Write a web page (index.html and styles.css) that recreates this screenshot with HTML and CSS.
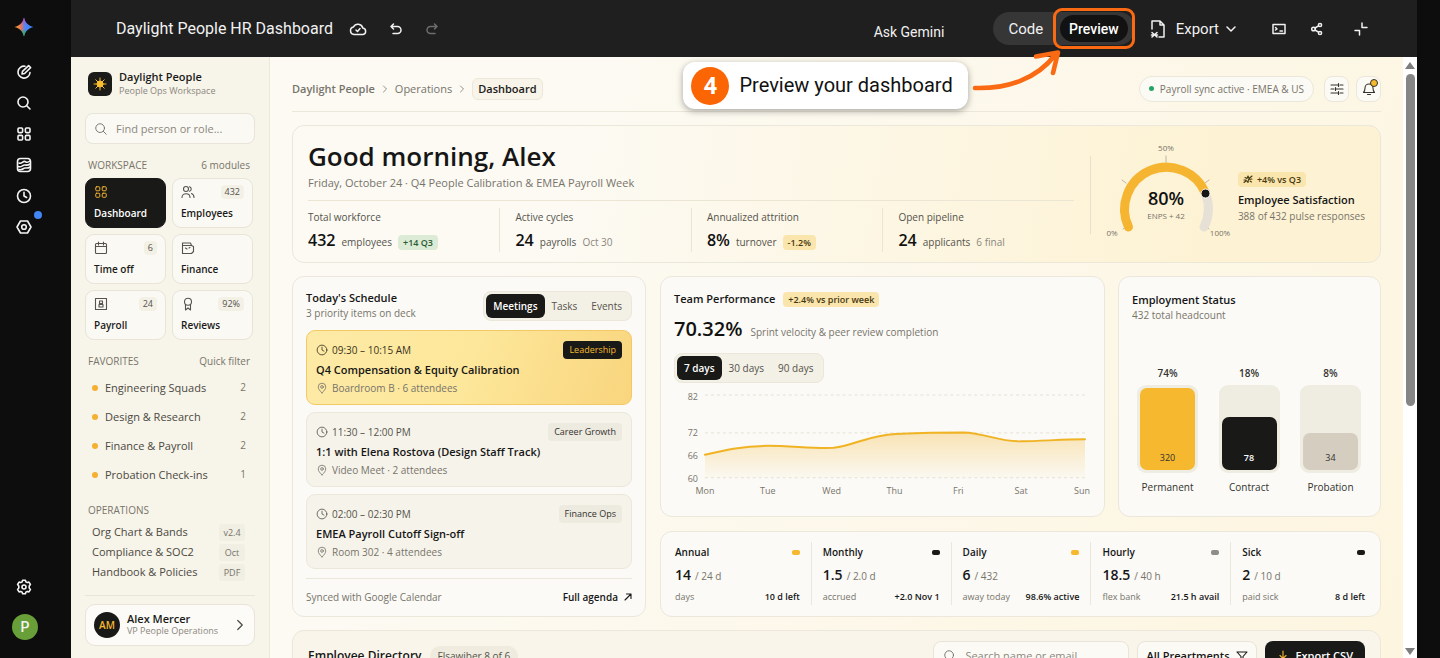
FILE: index.html
```html
<!DOCTYPE html>
<html lang="en">
<head>
<meta charset="utf-8">
<title>Daylight People HR Dashboard</title>
<link rel="stylesheet" href="styles.css">
</head>
<body>
<svg class="defs" aria-hidden="true">
  <symbol id="i-search" viewBox="0 0 16 16"><circle cx="7" cy="7" r="5"/><path d="M10.700 10.700L14 14"/></symbol>
  <symbol id="i-grid" viewBox="0 0 16 16"><rect x="2" y="2" width="4.600" height="4.600" rx="1"/><rect x="9.400" y="2" width="4.600" height="4.600" rx="1"/><rect x="2" y="9.400" width="4.600" height="4.600" rx="1"/><rect x="9.400" y="9.400" width="4.600" height="4.600" rx="1"/></symbol>
  <symbol id="i-clock" viewBox="0 0 16 16"><circle cx="8" cy="8" r="6.500"/><path d="M8 4.200V8l2.600 1.500"/></symbol>
  <symbol id="i-pin" viewBox="0 0 16 16"><path d="M8 14.500C5 11.600 3 9.300 3 6.600a5 5 0 0 1 10 0c0 2.700-2 5-5 7.900z"/><circle cx="8" cy="6.600" r="1.800"/></symbol>
  <symbol id="i-right" viewBox="0 0 8 8"><path d="M2.500 1l3 3-3 3"/></symbol>
</svg>

<nav class="rail" aria-label="Gemini">
  <a class="rail-btn logo" href="#" aria-label="Gemini home"><svg viewBox="0 0 20 20" width="20" height="20">
    <defs>
      <linearGradient id="g1" x1="0" y1="0.500" x2="1" y2="0.500"><stop offset="0" stop-color="#f9a825"/><stop offset="0.350" stop-color="#e8745c"/><stop offset="0.550" stop-color="#4f86f7"/><stop offset="1" stop-color="#3b82f6"/></linearGradient>
      <linearGradient id="g2" x1="0" y1="0" x2="0" y2="1"><stop offset="0" stop-color="#d946c8"/><stop offset="0.400" stop-color="#a24bd8" stop-opacity="0"/><stop offset="0.600" stop-color="#22b35e" stop-opacity="0"/><stop offset="0.900" stop-color="#22b35e"/></linearGradient>
    </defs>
    <path fill="url(#g1)" d="M10 .500C11 5.500 14.500 9 19.500 10 14.500 11 11 14.500 10 19.500 9 14.500 5.500 11 .500 10 5.500 9 9 5.500 10 .500z"/>
    <path fill="url(#g2)" d="M10 .500C11 5.500 14.500 9 19.500 10 14.500 11 11 14.500 10 19.500 9 14.500 5.500 11 .500 10 5.500 9 9 5.500 10 .500z"/></svg></a>
  <button class="rail-btn" aria-label="New chat"><svg class="ic" viewBox="0 0 16 16" width="16" height="16"><path d="M9 2.200A6 6 0 1 0 14 8.500"/><path d="M6 10l.500-2.600L12.600 1.600l2 2L8.600 9.500z"/></svg></button>
  <button class="rail-btn" aria-label="Search"><svg class="ic" width="16" height="16"><use href="#i-search"/></svg></button>
  <button class="rail-btn" aria-label="Apps"><svg class="ic" width="16" height="16"><use href="#i-grid"/></svg></button>
  <button class="rail-btn" aria-label="Library"><svg class="ic" viewBox="0 0 16 16" width="16" height="16"><rect x="1.500" y="1.500" width="13" height="13" rx="3"/><path d="M3 6c3 1.500 4-2.500 6-1.500S11.500 6 14 4M2 9.500c4 1.500 4.500-2 7-1.500s3 .500 5-1M3 12.500c4 1 4-1.500 6-1.500s3 .500 5-1"/></svg></button>
  <button class="rail-btn" aria-label="Recent"><svg class="ic" width="16" height="16"><use href="#i-clock"/></svg></button>
  <button class="rail-btn" aria-label="Extensions"><svg class="ic" viewBox="0 0 16 16" width="16" height="16"><path d="M4.500 2h7L15 8l-3.500 6h-7L1 8z"/><circle cx="8" cy="8" r="2.300"/></svg><span class="rail-dot"></span></button>
  <button class="rail-btn rail-end" aria-label="Settings"><svg class="ic" viewBox="0 0 16 16" width="16" height="16"><path d="M6.600 1.200h2.800l.500 1.700 1.300.700 1.700-.500 1.500 2.400-1.200 1.400v2.200l1.200 1.400-1.500 2.400-1.700-.500-1.300.700-.500 1.700H6.600l-.500-1.700-1.300-.700-1.700.500-1.500-2.400 1.200-1.400V6.900L1.600 5.500l1.500-2.400 1.700.500 1.300-.700z"/><circle cx="8" cy="8" r="2"/></svg></button>
  <a class="me" href="#">P</a>
</nav>

<div class="canvas">
  <header class="bar">
    <h2 class="doc-title">Daylight People HR Dashboard</h2>
    <div class="doc-tools">
      <button aria-label="Saved to cloud"><svg class="ic" viewBox="0 0 18 14" width="18" height="14"><path d="M5 12.500a3.800 3.800 0 0 1-.500-7.500 5 5 0 0 1 9.300 1A3.300 3.300 0 0 1 14 12.500z"/><path d="M7 8l1.500 1.500L11 6.500"/></svg></button>
      <button aria-label="Undo"><svg class="ic" viewBox="0 0 14 14" width="14" height="14"><path d="M4.500 2L2 4.500 4.500 7M2 4.500h6.500a3.500 3.500 0 0 1 0 7H4"/></svg></button>
      <button class="dim" aria-label="Redo"><svg class="ic" viewBox="0 0 14 14" width="14" height="14"><path d="M9.500 2L12 4.500 9.500 7M12 4.500H5.500a3.500 3.500 0 0 0 0 7H10"/></svg></button>
    </div>
    <button class="ask">Ask Gemini</button>
    <div class="mode">
      <button class="mode-btn">Code</button>
      <div class="mode-focus">
        <button class="mode-btn on">Preview</button>
        <div class="callout"><span class="step">4</span>Preview your dashboard</div>
        <svg class="arrow" viewBox="0 0 96 48" width="96" height="48"><path d="M6 40C38 41 68 31 86 7M67 8.500L89 4.500 84 25"/></svg>
      </div>
    </div>
    <button class="export"><svg class="ic" viewBox="0 0 16 20" width="16" height="20"><path d="M2 10V2h8l4 4v12H9M10 2v4h4M2 13.500l5 4.500M7 13.500L2 18M1.500 16h6"/></svg>Export<svg class="ic chev" viewBox="0 0 10 8" width="10" height="8"><path d="M1 2l4 4 4-4"/></svg></button>
    <div class="bar-icons">
      <button aria-label="Console"><svg class="ic" viewBox="0 0 14 12" width="14" height="12"><rect x="1" y="1.500" width="12" height="9"/><path d="M3.500 4.500l1.500 1.500-1.500 1M8 8h2.500"/></svg></button>
      <button aria-label="Share"><svg class="ic" viewBox="0 0 14 14" width="14" height="14"><circle cx="3.500" cy="7" r="1.800"/><circle cx="10" cy="3" r="1.600"/><circle cx="10" cy="11" r="1.600"/><path d="M5 6l3.500-2.200M5 8l3.500 2.200"/></svg></button>
      <button aria-label="Collapse"><svg class="ic" viewBox="0 0 14 14" width="14" height="14"><path d="M8 1v4.500h5M1 8.500h4.500V13"/></svg></button>
    </div>
  </header>

  <div class="app">
    <aside class="side">
      <div class="brand">
        <span class="brand-mark"><svg viewBox="0 0 14 14" width="14" height="14"><circle cx="7" cy="7" r="3"/><path d="M7 1v12M1 7h12M2.800 2.800l8.400 8.400M11.200 2.800l-8.400 8.400"/></svg></span>
        <div><strong>Daylight People</strong><small>People Ops Workspace</small></div>
      </div>
      <label class="find"><svg class="ic" width="14" height="14"><use href="#i-search"/></svg><input type="text" placeholder="Find person or role..." aria-label="Find person or role"></label>

      <div class="side-head"><h3>WORKSPACE</h3><span>6 modules</span></div>
      <div class="tiles">
        <a class="tile on" href="#"><span class="tile-top"><svg class="ic" width="14" height="14"><use href="#i-grid"/></svg></span>Dashboard</a>
        <a class="tile" href="#"><span class="tile-top"><svg class="ic" viewBox="0 0 14 14" width="14" height="14"><circle cx="5" cy="4" r="2.500"/><path d="M1 12.500c0-5 8-5 8 0M8.500 1.700a2.400 2.400 0 0 1 0 4.600M10.500 8.500c2 .700 2.500 2.500 2.500 4"/></svg><b>432</b></span>Employees</a>
        <a class="tile" href="#"><span class="tile-top"><svg class="ic" viewBox="0 0 14 14" width="14" height="14"><rect x="1.500" y="2.500" width="11" height="10" rx="1"/><path d="M1.500 5.500h11M4.500 1v3M9.500 1v3"/></svg><b>6</b></span>Time off</a>
        <a class="tile" href="#"><span class="tile-top"><svg class="ic" viewBox="0 0 14 14" width="14" height="14"><path d="M1.500 2h8l1 2.500 2 1v5l-2 2h-9zM1.500 4.500h9M4.500 7l1.500 1M8 7l1-.500"/></svg></span>Finance</a>
        <a class="tile" href="#"><span class="tile-top"><svg class="ic" viewBox="0 0 14 14" width="14" height="14"><rect x="1.500" y="1.500" width="11" height="11"/><path d="M5.500 4h3v2.500h-3zM5 7.500h4V10H5z"/></svg><b>24</b></span>Payroll</a>
        <a class="tile" href="#"><span class="tile-top"><svg class="ic" viewBox="0 0 14 14" width="14" height="14"><circle cx="7" cy="4.700" r="3.500"/><path d="M4.500 7.500v5.500L7 11l2.500 2V7.500"/></svg><b>92%</b></span>Reviews</a>
      </div>

      <div class="side-head"><h3>FAVORITES</h3><span>Quick filter</span></div>
      <ul class="favs">
        <li><a href="#">Engineering Squads</a><span>2</span></li>
        <li><a href="#">Design &amp; Research</a><span>2</span></li>
        <li><a href="#">Finance &amp; Payroll</a><span>2</span></li>
        <li><a href="#">Probation Check-ins</a><span>1</span></li>
      </ul>

      <div class="side-head"><h3>OPERATIONS</h3></div>
      <ul class="ops">
        <li><a href="#">Org Chart &amp; Bands</a><span>v2.4</span></li>
        <li><a href="#">Compliance &amp; SOC2</a><span>Oct</span></li>
        <li><a href="#">Handbook &amp; Policies</a><span>PDF</span></li>
      </ul>
      <div class="side-foot">
        <button class="user"><span class="initials">AM</span><span class="user-text"><strong>Alex Mercer</strong><small>VP People Operations</small></span><svg class="ic thin" width="12" height="12"><use href="#i-right"/></svg></button>
      </div>
    </aside>

    <main class="main">
      <div class="top">
        <nav class="crumbs" aria-label="Breadcrumb"><a class="root" href="#">Daylight People</a><svg class="ic thin" width="8" height="8"><use href="#i-right"/></svg><a href="#">Operations</a><svg class="ic thin" width="8" height="8"><use href="#i-right"/></svg><span class="here">Dashboard</span></nav>
        <span class="sync">Payroll sync active · EMEA &amp; US</span>
        <button class="sq" aria-label="Filters"><svg class="ic" viewBox="0 0 14 14" width="14" height="14"><path d="M1 3h7M10 3h3M1 7h3M6 7h7M1 11h7M10 11h3M8.500 1.500v3M5.500 5.500v3M8.500 9.500v3"/></svg></button>
        <button class="sq" aria-label="Notifications"><svg class="ic" viewBox="0 0 14 14" width="14" height="14"><path d="M1.500 10.500C3 9 3 8 3 6a4 4 0 0 1 8 0c0 2 0 3 1.500 4.500zM5.500 12.500h3"/></svg><span class="alert"></span></button>
      </div>

      <section class="card hero">
        <div class="hero-main">
          <h1>Good morning, Alex</h1>
          <p>Friday, October 24 · Q4 People Calibration &amp; EMEA Payroll Week</p>
          <div class="metrics">
            <div><h4>Total workforce</h4><p><b>432</b>employees<span class="tag green">+14 Q3</span></p></div>
            <div><h4>Active cycles</h4><p><b>24</b>payrolls<i>Oct 30</i></p></div>
            <div><h4>Annualized attrition</h4><p><b>8%</b>turnover<span class="tag">-1.2%</span></p></div>
            <div><h4>Open pipeline</h4><p><b>24</b>applicants<i>6 final</i></p></div>
          </div>
        </div>
        <div class="rule"></div>
        <svg class="gauge" viewBox="0 0 130 100" width="130" height="100">
          <path class="tick" d="M64 16v6M20 40l4 3M107 40l-4 3M21 89l4-3M107 89l-4-3"/>
          <path class="track" d="M103.500 53.500A42 42 0 0 1 102 87"/>
          <path class="fill" d="M26.500 87A42 42 0 1 1 103.500 53.500"/>
          <circle class="knob" cx="103.500" cy="53.500" r="4.500"/>
          <text class="g-val" x="64" y="65">80%</text>
          <text class="g-sub" x="64" y="79">ENPS + 42</text>
          <text class="g-sub" x="64" y="11">50%</text>
          <text class="g-sub" x="10" y="96">0%</text>
          <text class="g-sub" x="118" y="96">100%</text>
        </svg>
        <div class="sat">
          <span class="tag"><svg class="ic" viewBox="0 0 10 10" width="10" height="10"><path d="M1 8.500l2.500-2 1.500 2 .500-3L9 5M2 3.500l2 1L5 2l1 2.500L9 2M1 6h2M7 7l1.500 1"/></svg>+4% vs Q3</span>
          <h3>Employee Satisfaction</h3>
          <p>388 of 432 pulse responses</p>
        </div>
      </section>

      <div class="cols">
        <section class="card sched">
          <div class="row-head">
            <div><h3>Today's Schedule</h3><p class="sub">3 priority items on deck</p></div>
            <div class="seg"><button class="on">Meetings</button><button>Tasks</button><button>Events</button></div>
          </div>
          <div class="events">
            <article class="event hot"><span class="when"><svg class="ic" width="12" height="12"><use href="#i-clock"/></svg>09:30 – 10:15 AM</span><span class="kind">Leadership</span><h4>Q4 Compensation &amp; Equity Calibration</h4><span class="where"><svg class="ic" width="12" height="12"><use href="#i-pin"/></svg>Boardroom B · 6 attendees</span></article>
            <article class="event"><span class="when"><svg class="ic" width="12" height="12"><use href="#i-clock"/></svg>11:30 – 12:00 PM</span><span class="kind">Career Growth</span><h4>1:1 with Elena Rostova (Design Staff Track)</h4><span class="where"><svg class="ic" width="12" height="12"><use href="#i-pin"/></svg>Video Meet · 2 attendees</span></article>
            <article class="event"><span class="when"><svg class="ic" width="12" height="12"><use href="#i-clock"/></svg>02:00 – 02:30 PM</span><span class="kind">Finance Ops</span><h4>EMEA Payroll Cutoff Sign-off</h4><span class="where"><svg class="ic" width="12" height="12"><use href="#i-pin"/></svg>Room 302 · 4 attendees</span></article>
          </div>
          <div class="sched-foot"><span>Synced with Google Calendar</span><a href="#">Full agenda<svg class="ic" viewBox="0 0 8 8" width="8" height="8"><path d="M1 7l6-6M2.500 1H7v4.500"/></svg></a></div>
        </section>

        <div class="right">
          <section class="card perf">
            <div class="perf-title"><h3>Team Performance</h3><span class="tag">+2.4% vs prior week</span></div>
            <p class="perf-val"><b>70.32%</b>Sprint velocity &amp; peer review completion</p>
            <div class="seg"><button class="on">7 days</button><button>30 days</button><button>90 days</button></div>
            <svg class="chart" viewBox="0 0 417 112">
              <defs><linearGradient id="area" x1="0" y1="0" x2="0" y2="1"><stop offset="0" stop-color="#f5c661" stop-opacity="0.450"/><stop offset="1" stop-color="#f5c661" stop-opacity="0.030"/></linearGradient></defs>
              <path class="gridline" d="M31 8H412M31 46H412M31 91H412"/>
              <path fill="url(#area)" d="M31 68C52 63 70 59 94 59S140 62 160 61C182 58 196 48 222 47S270 45.500 290 45.500C312 46 325 55 348 54.500S392 52.500 412 52.500V91H31z"/>
              <path class="line" d="M31 68C52 63 70 59 94 59S140 62 160 61C182 58 196 48 222 47S270 45.500 290 45.500C312 46 325 55 348 54.500S392 52.500 412 52.500"/>
              <g class="ylab"><text x="24" y="13">82</text><text x="24" y="49">72</text><text x="24" y="72">66</text><text x="24" y="95">60</text></g>
              <g class="xlab"><text x="31" y="107">Mon</text><text x="94" y="107">Tue</text><text x="158" y="107">Wed</text><text x="221" y="107">Thu</text><text x="285" y="107">Fri</text><text x="348" y="107">Sat</text><text x="409" y="107">Sun</text></g>
            </svg>
          </section>

          <section class="card status">
            <h3>Employment Status</h3>
            <p class="sub">432 total headcount</p>
            <div class="bars">
              <div class="bar-col"><b>74%</b><div class="slot"><div class="level gold" style="height:100%">320</div></div>Permanent</div>
              <div class="bar-col"><b>18%</b><div class="slot"><div class="level ink" style="height:65%">78</div></div>Contract</div>
              <div class="bar-col"><b>8%</b><div class="slot"><div class="level stone" style="height:45%">34</div></div>Probation</div>
            </div>
          </section>

          <section class="card leave">
            <div><h4>Annual<i class="gold"></i></h4><p><b>14</b>/ 24 d</p><footer>days<strong>10 d left</strong></footer></div>
            <div><h4>Monthly<i class="ink"></i></h4><p><b>1.5</b>/ 2.0 d</p><footer>accrued<strong>+2.0 Nov 1</strong></footer></div>
            <div><h4>Daily<i class="gold"></i></h4><p><b>6</b>/ 432</p><footer>away today<strong>98.6% active</strong></footer></div>
            <div><h4>Hourly<i class="grey"></i></h4><p><b>18.5</b>/ 40 h</p><footer>flex bank<strong>21.5 h avail</strong></footer></div>
            <div><h4>Sick<i class="ink"></i></h4><p><b>2</b>/ 10 d</p><footer>paid sick<strong>8 d left</strong></footer></div>
          </section>
        </div>
      </div>

      <section class="card dir">
        <h3>Employee Directory</h3><span class="chip">Flsawiber 8 of 6</span>
        <label class="dir-find"><svg class="ic" width="14" height="14"><use href="#i-search"/></svg><input type="text" placeholder="Search name or email..." aria-label="Search name or email"></label>
        <span class="dept"><select aria-label="Department"><option>All Preartments</option></select><svg class="ic" viewBox="0 0 12 12" width="12" height="12"><path d="M1 2h10L7 6.500V11H5V6.500z"/></svg></span>
        <button class="csv"><svg class="ic" viewBox="0 0 12 12" width="12" height="12"><path d="M6 1v7M3 5.500l3 3 3-3M2 11h8"/></svg>Export CSV</button>
      </section>
    </main>
    <div class="scroll" aria-hidden="true"><span class="up"></span><span class="thumb"></span><span class="down"></span></div>
  </div>
</div>
</body>
</html>
```

FILE: styles.css
```css
* { box-sizing: border-box; }
body {
  margin: 0;
  display: flex;
  height: 100vh;
  overflow: hidden;
  padding-right: 23px;
  background: #0d0d0d;
  color: #161616;
  font: 11px/16px "Open Sans", "Noto Sans", sans-serif;
}
h1, h2, h3, h4, p, ul { margin: 0; padding: 0; }
h1, h2, h3, h4 { font-weight: 600; }
ul { list-style: none; }
button, input, select { font: inherit; color: inherit; border: 0; background: none; padding: 0; margin: 0; }
a { color: inherit; text-decoration: none; }
i { font-style: normal; }
.defs { position: absolute; width: 0; height: 0; }
.ic { flex: none; fill: none; stroke: currentColor; stroke-width: 1.1; stroke-linecap: round; stroke-linejoin: round; }
.thin { stroke-width: .8; }

/* Left rail */
.rail { flex: none; width: 71px; padding: 15px 12px 18px; display: flex; flex-direction: column; gap: 7px; color: #f4f4f4; }
.rail-btn { position: relative; width: 24px; height: 24px; display: grid; place-items: center; }
.rail-btn .ic { stroke-width: 1.6; }
.logo { margin-bottom: 14px; }
.rail-dot { position: absolute; top: -4px; right: -6px; width: 8px; height: 8px; border-radius: 50%; background: #4285f4; }
.rail-end { margin-top: auto; margin-bottom: 8px; }
.me { width: 26px; height: 26px; border-radius: 50%; background: #689f38; font: 500 14px/26px Roboto, sans-serif; text-align: center; }

/* Header bar */
.canvas { flex: 1; min-width: 0; display: flex; flex-direction: column; }
.bar { flex: none; height: 57px; display: flex; align-items: center; padding: 0 49px 0 45px; background: #1f1f1f; color: #f1f1f1; font-family: Roboto, sans-serif; }
.bar button { display: flex; align-items: center; }
.bar .ic { stroke-width: 1.5; }
.doc-title { font-size: 16px; font-weight: 400; }
.doc-tools { display: flex; gap: 22px; margin-left: 16px; }
.dim { color: #6d6d6d; }
.ask { margin: 6px 49px 0 auto; font-size: 14px; }
.mode { display: flex; align-items: center; height: 33px; border-radius: 17px; background: #363636; }
.mode-btn { height: 28px; padding: 0 9px; font-size: 15px; }
.mode > .mode-btn { padding-left: 15px; padding-right: 10px; }
.mode-btn.on { height: 27px; border-radius: 14px; background: #121212; color: #fff; font-size: 14px; font-weight: 500; }
.mode-focus { position: relative; padding: 4px; border: 3px solid #f96a12; border-radius: 9px; margin: -4px 0; }
.callout {
  position: absolute; z-index: 2; top: 51px; right: 164px;
  display: flex; align-items: center; gap: 10px;
  padding: 4px 15px 4px 8px;
  border-radius: 12px; background: #fff; color: #111;
  box-shadow: 0 2px 7px rgba(0, 0, 0, .35);
  font-size: 20px; line-height: 39px; white-space: nowrap;
}
.step { width: 38px; height: 38px; border-radius: 50%; background: #fb6504; color: #fff; font: 700 24px/38px Roboto, sans-serif; text-align: center; }
.arrow { position: absolute; z-index: 2; top: 37px; right: 67px; fill: none; stroke: #f96a12; stroke-width: 4.6; stroke-linecap: round; stroke-linejoin: round; }
.export { gap: 10px; margin-left: 15px; font-size: 15px; }
.chev { margin-left: -3px; }
.bar-icons { display: flex; gap: 24px; margin-left: 36px; }
.bar-icons button:last-child { margin-left: 6px; }

/* App frame */
.app { flex: 1; min-height: 0; display: flex; background: linear-gradient(115deg, #fcfaf3 30%, #fdf5df); }
.side { flex: none; width: 199px; padding: 15px 14px 12px; display: flex; flex-direction: column; background: #f7f4e9; border-right: 1px solid #ebe7da; color: #4b4942; }
.brand { display: flex; align-items: center; gap: 7px; height: 24px; padding-left: 3px; line-height: 14px; }
.brand-mark { width: 24px; height: 24px; border-radius: 6px; background: #1b1b19; display: grid; place-items: center; }
.brand-mark svg { fill: #fbc02d; stroke: #fbc02d; stroke-width: 1; stroke-linecap: round; }
.brand strong, .brand small { display: block; }
.brand strong { color: #1b1b19; font-weight: 600; }
.brand small, .user small { color: #8b887f; font-size: 9px; }
.find { display: flex; align-items: center; gap: 8px; height: 31px; margin-top: 17px; padding: 0 8px; border: 1px solid #e8e4d8; border-radius: 8px; background: #fbf9f3; color: #77746b; }
.find input, .dir-find input { flex: 1; min-width: 0; outline: 0; }
::placeholder { color: #8b887f; opacity: 1; }
.side-head { display: flex; justify-content: space-between; margin-top: 13px; padding: 0 5px 0 3px; font-size: 10px; color: #77746b; }
.side-head h3 { font-size: 10px; font-weight: 400; }
.tiles { display: grid; grid-template-columns: 1fr 1fr; gap: 6px; margin: 5px 2px 0 0; }
.tile { height: 50px; padding: 6px 8px; border: 1px solid #e8e4d8; border-radius: 9px; background: #fbf9f4; color: #1b1b19; font-size: 10px; font-weight: 600; }
.tile-top { display: flex; justify-content: space-between; align-items: center; height: 14px; margin-bottom: 6px; color: #55534c; }
.tile b { padding: 0 4px; border-radius: 4px; background: #f3f0e6; font-size: 9px; line-height: 14px; font-weight: 400; }
.tile.on { background: #191917; border-color: #191917; color: #fff; }
.tile.on .tile-top { color: #f5b82e; }
.favs { margin-top: 4px; }
.favs li { display: flex; justify-content: space-between; padding: 0 9px 0 7px; line-height: 29px; }
.favs a { display: flex; align-items: center; gap: 7px; }
.favs a::before { content: ""; width: 6px; height: 6px; border-radius: 50%; background: #f5b031; }
.favs span { color: #77746b; font-size: 10px; }
.ops { margin-top: 4px; }
.ops li { display: flex; align-items: center; justify-content: space-between; height: 20px; padding: 0 10px 0 7px; }
.ops span { padding: 0 4px; background: #f1eee3; border-radius: 3px; color: #77746b; font-size: 9px; line-height: 17px; min-width: 26px; text-align: center; }
.side-foot { margin-top: 13px; padding-top: 8px; border-top: 1px solid #e8e4d8; }
.user { width: 100%; height: 42px; display: flex; align-items: center; padding: 0 8px; border: 1px solid #e8e4d8; border-radius: 10px; background: #fcfbf7; text-align: left; line-height: 12px; }
.initials { width: 26px; height: 26px; border-radius: 50%; background: #191917; color: #f5b82e; font-size: 10px; font-weight: 600; line-height: 26px; text-align: center; }
.user-text { flex: 1; margin-left: 7px; }
.user-text strong, .user-text small { display: block; }
.user-text strong { color: #1b1b19; font-size: 11px; font-weight: 600; }

/* Main column */
.main { flex: 1; min-width: 0; overflow: hidden; padding: 0 22px 0 22px; display: flex; flex-direction: column; gap: 13px; }
.main > * { flex: none; }
.top { display: flex; align-items: center; gap: 7px; height: 55px; padding-top: 9px; border-bottom: 1px solid #ebe7da; }
.crumbs { flex: 1; display: flex; align-items: center; gap: 6px; color: #77746b; }
.root { font-weight: 600; }
.here { padding: 2px 5px; border: 1px solid #ebe7da; border-radius: 6px; background: #f8f4e9; color: #1b1b19; font-weight: 600; }
.sync { display: flex; align-items: center; gap: 6px; height: 26px; margin-right: 3px; padding: 0 9px; border: 1px solid #ebe7da; border-radius: 13px; background: #fcfaf4; color: #77746b; font-size: 10px; }
.sync::before { content: ""; width: 5px; height: 5px; border-radius: 50%; background: #22a565; }
.sq { position: relative; width: 25px; height: 26px; display: grid; place-items: center; border: 1px solid #ebe7da; border-radius: 8px; background: #fcfaf4; color: #33322e; }
.alert { position: absolute; top: 2px; right: 2px; width: 8px; height: 8px; border: 1px solid #33322e; border-radius: 50%; background: #f5b82e; }
.card { border: 1px solid #ebe7da; border-radius: 12px; background: #fbfaf6; }
.card h3 { font-size: 11px; line-height: 16px; }
.sub { color: #77746b; font-size: 10px; line-height: 15px; }
.tag { display: inline-flex; align-items: center; gap: 4px; padding: 0 5px; border-radius: 4px; background: #fae5ad; color: #45380f; font-size: 9px; font-weight: 600; line-height: 15px; }
.green { background: #dcebd5; color: #2a5a34; }

/* Hero */
.hero { display: flex; align-items: center; height: 138px; padding: 2px 15px 0; background: linear-gradient(100deg, #fcfaf3 25%, #fdf2d3 85%); }
.hero-main { flex: 1; min-width: 0; }
.hero h1 { font-size: 26px; line-height: 36px; font-weight: 600; }
.hero-main > p { color: #77746b; font-size: 11px; line-height: 18px; }
.metrics { display: grid; grid-template-columns: repeat(4, 1fr); margin-top: 8px; padding-top: 7px; border-top: 1px solid #ebe5d4; }
.metrics div { height: 44px; padding-left: 15px; border-left: 1px solid #ebe5d4; }
.metrics div:first-child { padding-left: 0; border: 0; }
.metrics h4 { font-size: 10px; font-weight: 400; line-height: 18px; color: #55534c; }
.metrics p { display: flex; align-items: baseline; gap: 6px; font-size: 10px; line-height: 28px; color: #55534c; }
.metrics b { color: #111; font-size: 16px; font-weight: 600; }
.metrics i { color: #8b887f; }
.rule { width: 1px; height: 78px; margin: 0 11px 0 16px; background: #e8e0cc; }
.gauge { flex: none; align-self: flex-start; margin-top: 12px; }
.gauge path { fill: none; stroke-width: 9; stroke-linecap: round; }
.gauge .track { stroke: #e6e0d6; }
.gauge .fill { stroke: #f5b531; }
.gauge .tick { stroke: #bdb6a5; stroke-width: 1; }
.knob { fill: #161616; stroke: #fff; stroke-width: 1; }
.gauge text { text-anchor: middle; fill: #77746b; font-size: 8px; }
.gauge .g-val { font-size: 18px; font-weight: 600; fill: #111; }
.sat { margin-left: 6px; padding-top: 6px; color: #77746b; font-size: 10px; }
.sat h3 { margin-top: 4px; color: #161616; }

/* Two-column area */
.cols { display: grid; grid-template-columns: 354fr 721fr; gap: 14px; }
.right { display: grid; grid-template-columns: 445fr 263fr; grid-template-rows: 1fr auto; gap: 14px 13px; }
.row-head { display: flex; justify-content: space-between; align-items: center; }
.seg { display: inline-flex; padding: 2px; border: 1px solid #ebe7da; border-radius: 8px; background: #f3f0e6; }
.seg button { height: 24px; padding: 0 7px; border-radius: 6px; color: #55534c; font-size: 10px; }
.seg .on { background: #191917; color: #fff; font-weight: 600; }
.sched { padding: 13px 13px 11px; }
.events { display: grid; gap: 7px; margin-top: 9px; }
.event { display: grid; grid-template-columns: 1fr auto; align-content: center; height: 75px; padding: 0 9px; border: 1px solid #ebe7da; border-radius: 9px; background: #f6f3ea; }
.event.hot { border-color: #f2c964; background: linear-gradient(110deg, #fdeaa6, #fde79a 50%, #f9d57e); }
.when, .where { display: flex; align-items: center; gap: 4px; color: #55534c; font-size: 10px; }
.where { color: #77746b; }
.kind { padding: 0 6px; border-radius: 4px; background: #edeae0; color: #33322e; font-size: 9px; line-height: 18px; }
.hot .kind { background: #191917; color: #f5b82e; }
.hot .when { color: #3a3420; }
.event h4 { grid-column: 1 / -1; font-size: 11px; line-height: 22px; }
.where { grid-column: 1 / -1; line-height: 14px; }
.sched-foot { display: flex; justify-content: space-between; margin-top: 9px; padding-top: 10px; border-top: 1px solid #ebe7da; color: #77746b; font-size: 10px; }
.sched-foot a { display: flex; align-items: center; gap: 6px; color: #161616; font-weight: 600; }

.perf { padding: 14px 14px 6px 13px; }
.perf-title { display: flex; align-items: center; gap: 8px; line-height: 18px; }
.perf-val { display: flex; align-items: baseline; gap: 8px; margin-top: 8px; color: #77746b; font-size: 10px; line-height: 28px; }
.perf-val b { color: #111; font-size: 20px; font-weight: 600; }
.perf .seg { margin-top: 7px; }
.chart { display: block; width: 100%; margin-top: 4px; overflow: visible; }
.gridline { fill: none; stroke: #e5e1d5; stroke-dasharray: 3 3; }
.line { fill: none; stroke: #f0b323; stroke-width: 2; stroke-linecap: round; }
.chart text { fill: #77746b; font-size: 9px; }
.ylab { text-anchor: end; }
.xlab { text-anchor: middle; }

.status { display: flex; flex-direction: column; padding: 15px 13px 21px; }
.bars { flex: 1; display: flex; justify-content: space-between; align-items: flex-end; padding: 0 6px 0 5px; }
.bar-col { display: flex; flex-direction: column; align-items: center; width: 61px; font-size: 10px; color: #33322e; }
.bar-col b { font-weight: 600; }
.slot { width: 100%; height: 88px; margin: 4px 0 6px; padding: 3px; display: flex; align-items: flex-end; border-radius: 9px; background: #efece2; }
.level { width: 100%; display: flex; align-items: flex-end; justify-content: center; padding-bottom: 4px; border-radius: 7px; font-size: 9px; }
.gold { background: #f5b82e; }
.ink { background: #191917; }
.level.ink { color: #fff; font-weight: 600; }
.stone { background: #d5cec0; }
.grey { background: #8d8d89; }

.leave { grid-column: 1 / -1; display: grid; grid-template-columns: 150fr 140fr 140fr 140fr 150fr; padding: 10px 0 11px; }
.leave div { padding: 1px 11px; border-left: 1px solid #ebe7da; }
.leave div:first-child { padding-left: 14px; border: 0; }
.leave div:last-child { padding-right: 15px; }
.leave h4 { display: flex; justify-content: space-between; align-items: center; font-size: 10px; line-height: 18px; }
.leave i { width: 8px; height: 5px; border-radius: 2px; }
.leave p { display: flex; align-items: baseline; gap: 4px; color: #77746b; font-size: 10px; line-height: 28px; }
.leave b { color: #161616; font-size: 14px; font-weight: 600; }
.leave footer { display: flex; justify-content: space-between; color: #77746b; font-size: 9px; line-height: 14px; white-space: nowrap; }
.leave strong { color: #161616; font-weight: 600; }

.dir { display: flex; align-items: center; gap: 8px; padding: 10px 15px; height: 52px; background: #f9f5ea; }
.dir h3 { font-size: 12px; }
.chip { padding: 0 8px; border-radius: 10px; background: #efebde; color: #55534c; font-size: 10px; line-height: 20px; }
.dir-find { display: flex; align-items: center; gap: 8px; width: 196px; height: 30px; margin-left: auto; padding: 0 9px; border: 1px solid #e8e4d8; border-radius: 8px; background: #fcfaf4; color: #77746b; }
.dept { display: flex; align-items: center; gap: 6px; height: 30px; padding: 0 8px; border: 1px solid #e8e4d8; border-radius: 8px; background: #fcfaf4; }
.dept select { appearance: none; font-weight: 600; }
.csv { display: flex; align-items: center; gap: 6px; height: 30px; padding: 0 12px; border-radius: 8px; background: #191917; color: #fff; font-weight: 600; }
.csv .ic { color: #f5b82e; }

/* Scrollbar */
.scroll { flex: none; width: 14px; display: flex; flex-direction: column; align-items: center; padding: 5px 0 3px; background: #fff; }
.up, .down { border: 5px solid transparent; }
.up { border-top: 0; border-bottom: 7px solid #7d7d7d; }
.down { margin-top: auto; border-bottom: 0; border-top: 7px solid #7d7d7d; }
.thumb { width: 9px; height: 56%; margin-top: 5px; border-radius: 5px; background: #858585; }
```
